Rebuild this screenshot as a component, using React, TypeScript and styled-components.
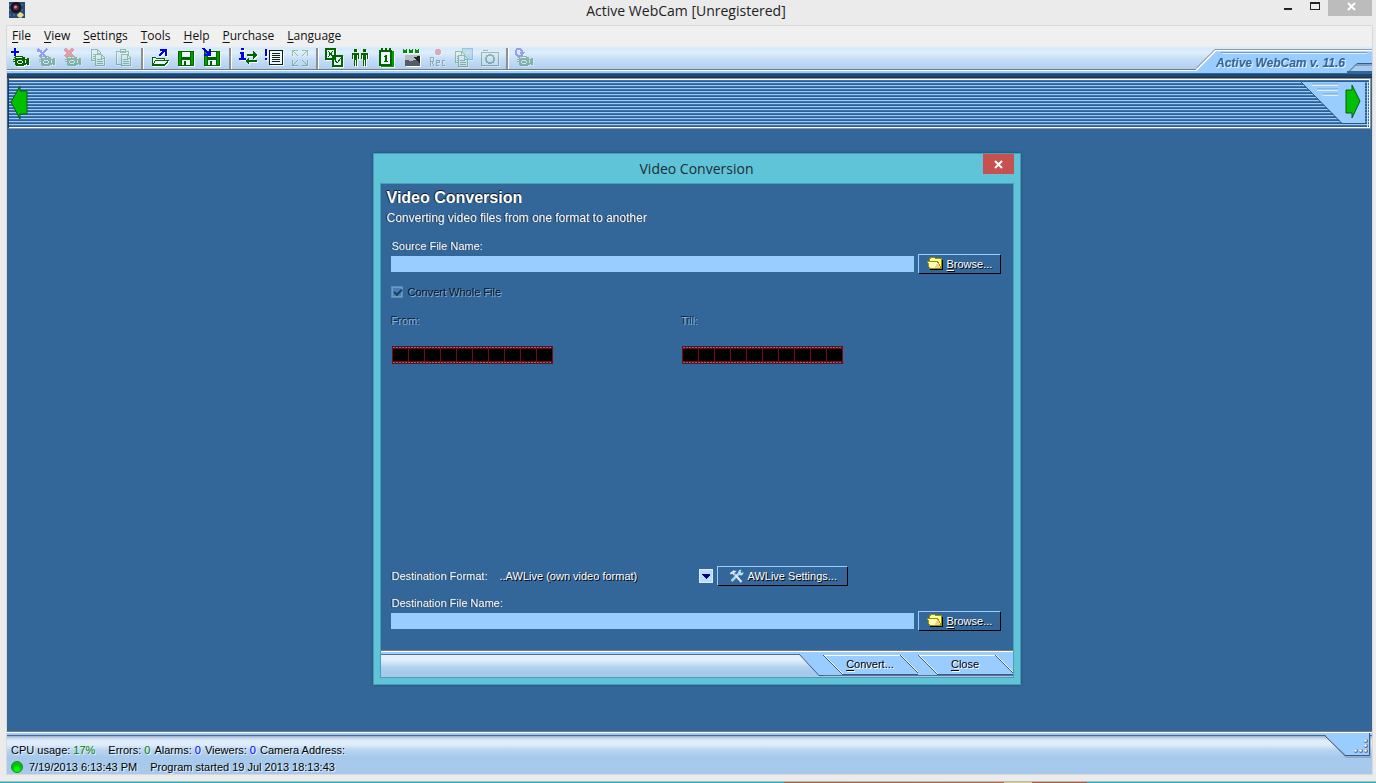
import React from "react";
import styled, { createGlobalStyle } from "styled-components";

const navy = "#336699";
const sky = "#99ccff";
const green = "#006400";
const blue = "#0000f0";
const glass =
  "linear-gradient(#b4cdea 0, #deedfb 3px, #e4f0fc 9px, #cfe3f6 13px, #b3d2f0 17px, #a6c9ec 22px)";

const Global = createGlobalStyle`
  * { box-sizing: border-box; }
  body { margin: 0; background: #ebebeb; }
  button, input, select { font: inherit; }
`;

const Shell = styled.div`
  min-height: 100vh;
  display: flex;
  flex-direction: column;
  font: 11px/16px "Liberation Sans", Arial, sans-serif;
  background: #ebebeb;
  color: #000;
`;

const TitleBar = styled.header`
  display: grid;
  grid-template-columns: 1fr auto 1fr;
  height: 25px;
  padding: 0 4px 0 0;
`;
const AppIcon = styled.svg`
  width: 16px;
  height: 16px;
  margin: 2px 0 0 9px;
`;
const WindowTitle = styled.h1`
  margin: 0;
  font: 14px/22px "Open Sans", "Noto Sans", sans-serif;
  color: #222;
`;
const WindowControls = styled.div`
  display: flex;
  justify-content: flex-end;
  align-items: flex-start;
`;
const WindowButton = styled.button<{ $close?: boolean }>`
  width: ${(p) => (p.$close ? 44 : 27)}px;
  height: 16px;
  padding: 0;
  border: 0;
  background: ${(p) => (p.$close ? "#bcbcbc" : "transparent")};
  svg { display: block; margin: 0 auto; }
`;

const Body = styled.div`
  flex: 1;
  display: flex;
  flex-direction: column;
  margin: 0 3px 0 6px;
  border: 1px solid #d9d9d9;
  background: ${navy};
`;

const MenuBar = styled.nav`
  display: flex;
  height: 20px;
  padding-left: 5px;
  gap: 13px;
  background: #f0f0f0;
`;
const MenuLink = styled.a`
  font: 12px/20px "Open Sans", "Noto Sans", sans-serif;
  color: #111;
  text-decoration: none;
`;
const Key = styled.span`
  text-decoration: underline;
  text-underline-offset: 2px;
`;

const ToolStrip = styled.div`
  display: flex;
  justify-content: space-between;
  height: 27px;
  background: linear-gradient(#f0f0f0 0, #d5e9fb 2px, #deedfb 7px, #c5def6 13px, #b0d0f0 23px, #77797c 23px, #77797c 24px, #fff 24px, #fff 25px, ${sky} 25px);
`;
const Tools = styled.div`
  display: flex;
  height: 24px;
  align-items: center;
`;
const ToolButton = styled.button`
  width: 26px;
  height: 22px;
  padding: 1px 3px;
  border: 0;
  background: none;
  &:disabled { opacity: 0.32; }
  svg { display: block; filter: drop-shadow(1px 1px 0 #fff); }
`;
const ToolGap = styled.span<{ $narrow?: boolean }>`
  display: flex;
  justify-content: center;
  width: ${(p) => (p.$narrow ? 8 : 10)}px;
  height: 21px;
  &::before {
    content: "";
    width: 2px;
    background: #8b9095;
    border-right: 1px solid #fff;
  }
`;
const Version = styled.div`
  display: grid;
  width: 176px;
  > * { grid-area: 1 / 1; }
`;
const VersionText = styled.strong`
  z-index: 1;
  padding: 8px 0 0 20px;
  font: italic bold 12px/18px "Liberation Sans", Arial, sans-serif;
  color: #2f6496;
  text-shadow: 1px 1px 0 #e8f4ff;
`;

const Strip = styled.section`
  display: flex;
  flex-direction: column;
  height: 56px;
  padding: 5px 1px 0;
  background: linear-gradient(${navy} 0, ${navy} 1px, #1d4770 1px, #1d4770 4px, #16324f 4px, #16324f 5px, ${navy} 5px);
`;
const StripFrame = styled.div`
  flex: 1;
  display: flex;
  justify-content: space-between;
  border: 1px solid #8d9299;
  border-left-color: #1d3b5b;
  box-shadow: inset 0 1px 0 #fff, inset -1px -1px 0 #fff;
  background: repeating-linear-gradient(${sky} 0, ${sky} 1px, #4076ac 1px, #4076ac 2px, #2f6093 2px, #2f6093 3px);
`;
const StripButton = styled.button`
  padding: 0;
  border: 0;
  background: none;
  svg { display: block; }
`;

const Workspace = styled.main`
  flex: 1;
  display: flex;
  justify-content: center;
  align-items: flex-start;
  padding: 24px 0 24px 14px;
`;

const Dialog = styled.section`
  width: 648px;
  border: 1px solid #459fb3;
  background: #60c4d8;
  box-shadow: 0 0 2px #1f466d;
  padding: 0 6px 6px;
`;
const DialogBar = styled.div`
  display: grid;
  grid-template-columns: 1fr auto 1fr;
  height: 29px;
`;
const DialogCaption = styled.h2`
  margin: 0;
  font: 14px/30px "Open Sans", "Noto Sans", sans-serif;
  color: #1d2c33;
`;
const DialogClose = styled.button`
  justify-self: end;
  width: 31px;
  height: 20px;
  padding: 0;
  border: 0;
  background: #c75050;
  svg { display: block; margin: 0 auto; }
`;
const DialogBody = styled.form`
  border: 1px solid #4a9fb4;
  background: ${navy};
  color: #fff;
`;
const Fields = styled.div`
  display: flex;
  flex-direction: column;
  height: 466px;
  padding: 4px 12px 0 10px;
`;
const Heading = styled.h3`
  margin: 0 0 0 -4px;
  font: bold 16px/20px "Liberation Sans", Arial, sans-serif;
  text-shadow: -1px 0 0 #0b1a28, 0 -1px 0 #0b1a28;
`;
const Lead = styled.p`
  margin: 2px 0 12px -4px;
  font-size: 12px;
  line-height: 16px;
  text-shadow: -1px 0 0 #0f2235;
`;
const Caption = styled.label<{ $dim?: boolean; $column?: boolean }>`
  ${(p) => (p.$column ? "width: 109px;" : "")}
  padding-left: 1px;
  color: ${(p) => (p.$dim ? "#86b2de" : "#fff")};
  text-shadow: ${(p) => (p.$dim ? "-1px -1px 0 #0b1a28" : "-1px 0 0 #14304b")};
`;
const Row = styled.div`
  display: flex;
  align-items: center;
`;
const PathInput = styled.input`
  flex: 1;
  min-width: 0;
  height: 16px;
  padding: 0 3px;
  border: 0;
  background: ${sky};
`;
const PushButton = styled.button<{ $wide?: boolean }>`
  display: flex;
  align-items: center;
  gap: 3px;
  width: ${(p) => (p.$wide ? 131 : 83)}px;
  height: 20px;
  margin-left: 4px;
  padding: 0 0 0 ${(p) => (p.$wide ? 10 : 8)}px;
  border: 1px solid;
  border-color: ${sky} #000 #000 ${sky};
  background: ${navy};
  color: #fff;
  white-space: nowrap;
  text-shadow: 1px 1px 0 #000;
`;
const CheckRow = styled.label`
  display: flex;
  align-items: center;
  gap: 5px;
  margin: 10px 0 13px;
  color: #0a1622;
  text-shadow: 1px 1px 0 #86b2de;
`;
const CheckBox = styled.input`
  appearance: none;
  width: 12px;
  height: 12px;
  margin: 0;
  border: 1px solid #5c89b8;
  background: #4a7db0;
  box-shadow: inset 0 0 0 1px #6d9ac8;
  &:checked::before {
    content: "";
    display: block;
    width: 6px;
    height: 3px;
    margin: 2px 0 0 2px;
    border: solid #14415c;
    border-width: 0 0 2px 2px;
    rotate: -45deg;
  }
`;
const Clips = styled.div`
  display: grid;
  grid-template-columns: 290px 1fr;
  row-gap: 17px;
  svg { display: block; margin-left: 1px; }
`;
const Destination = styled.div`
  margin-top: auto;
  padding-bottom: 19px;
`;
const FormatRow = styled(Row)`
  margin-bottom: 9px;
`;
const FormatBox = styled.div`
  display: grid;
  width: 213px;
  align-items: center;
  > * { grid-area: 1 / 1; }
  svg { justify-self: end; pointer-events: none; }
`;
const FormatSelect = styled.select`
  appearance: none;
  width: 100%;
  height: 18px;
  padding: 0;
  border: 0;
  background: ${navy};
  color: #fff;
  text-shadow: 1px 1px 0 #000;
`;
const Footer = styled.footer`
  display: flex;
  justify-content: flex-end;
  height: 27px;
  padding-top: 4px;
  background: linear-gradient(#77797c 0, #77797c 1px, #fff 1px, #fff 2px, ${sky} 2px, ${sky} 4px, #5a6f94 4px, #5a6f94 5px, transparent 5px), ${glass};
`;
const FooterTab = styled.div`
  display: flex;
  height: 22px;
`;
const FooterButtons = styled.div`
  display: flex;
  background: ${sky};
  height: 22px;
  border-bottom: 1px solid #5a6f94;
`;
const SlantButton = styled.button`
  display: grid;
  width: 95px;
  height: 21px;
  padding: 0;
  border: 0;
  background: none;
  color: #000;
  > * { grid-area: 1 / 1; }
`;
const SlantText = styled.span`
  line-height: 20px;
  text-shadow: 1px 1px 0 #fff;
`;

const StatusBar = styled.footer`
  display: flex;
  justify-content: space-between;
  height: 43px;
  background: linear-gradient(#77797c 0, #77797c 1px, #fff 1px, #fff 2px, ${sky} 2px, ${sky} 4px, #4f678d 4px, #4f678d 5px, #94abc5 5px, #c3d7ec 7px, #e1eefb 10px, #deecfa 14px, #b9d5f1 19px, #a6c9ec 26px);
`;
const StatusRows = styled.div`
  padding: 10px 0 0 4px;
`;
const StatusRow = styled.div`
  display: flex;
  align-items: center;
  height: 17px;
  white-space: pre;
  text-shadow: 1px 1px 0 #e8f2fc;
`;
const Value = styled.span<{ $tone?: "ok" | "info" }>`
  margin: 0 4px 0 3px;
  color: ${(p) => (p.$tone === "info" ? "#0000ff" : "#008000")};
`;
const Item = styled.span<{ $gap?: number }>`
  margin-right: ${(p) => p.$gap ?? 0}px;
`;
const Lamp = styled.span`
  width: 12px;
  height: 12px;
  margin: 0 6px 0 0;
  border: 1px solid #2c7a34;
  border-radius: 6px;
  background: radial-gradient(circle at 5px 8px, #00ff00 2px, #00c400 5px);
`;
const Desktop = styled.div`
  height: 8px;
  background: linear-gradient(#ebebeb 6px, #b8b8b8 6px, #b8b8b8 7px, transparent 7px),
    linear-gradient(90deg, #17b4cc 0, #17b4cc 57%, #a75b3e 57%, #b4694a 73%, #d9cf8c 73%, #d9cf8c 75%, #a75b3e 75%, #a75b3e 79%, #17b4cc 79%);
`;

const Glyph = ({ children }: { children: React.ReactNode }) => (
  <svg width="20" height="20" viewBox="0 0 20 20" shapeRendering="crispEdges" aria-hidden="true">
    {children}
  </svg>
);
const Camera = () => (
  <g>
    <path fill={green} d="M5 8h8v1h2v2h2v-1h2v7h-2v-1h-1v1h-2v1H6v-1H5v-3H3v-1h2v-1H3v-1h2v-1H4V9h1z" />
    <path fill="#eef6fd" d="M6 9h6v1H6zM8 12h4v1H8zM7 13h1v2H7zM12 13h1v2h-1zM8 15h4v1H8zM15 12h1v3h-1z" />
  </g>
);
const Page = ({ x, y }: { x: number; y: number }) => (
  <g>
    <path fill="#e8f4ea" stroke={green} d={`M${x + 0.5} ${y + 0.5}h6l3 3v8h-9z`} />
    <path stroke={green} d={`M${x + 6.5} ${y + 1}v3h3M${x + 2} ${y + 5.5}h5M${x + 2} ${y + 7.5}h6M${x + 2} ${y + 9.5}h6`} fill="none" />
  </g>
);
const Floppy = () => (
  <g>
    <path fill={green} d="M2 3h15l1 1v14H2z" />
    <path fill="#00a000" d="M3 4h2v13H3zM15 4h2v13h-2z" />
    <path fill="#eef6fd" d="M6 4h8v5H6zM6 12h8v5H6z" />
    <path fill={green} d="M8 13h2v4H8z" />
  </g>
);

const tools: Record<string, React.ReactNode> = {
  "Add camera": <><Camera /><path fill={blue} d="M4 0h2v3h3v2H6v3H4V5H1V3h3z" /></>,
  "Camera settings": <><Camera /><path stroke={blue} strokeWidth="2" fill="none" d="M2 1l9 9M11 1L3 9M1 3h5" /></>,
  "Remove camera": <><Camera /><path stroke="#f00000" strokeWidth="3" fill="none" d="M3 1l8 8M11 1L3 9" /></>,
  Copy: <><Page x={3} y={1} /><Page x={7} y={6} /></>,
  Paste: <><path fill="none" stroke={green} d="M2.5 3.5h12v13h-12zM6 1.5h5v3H6z" /><Page x={7} y={6} /></>,
  Open: <><path fill="#eef6fd" stroke={green} d="M2.5 16.5v-7h3l1 1h8v2M2.5 17.5l3-5h13l-4 5z" /><path fill={green} d="M2 16h13v2H2z" /><path fill="none" stroke={blue} strokeWidth="2" d="M9 8l6-6M10 2h6v6" /></>,
  Save: <Floppy />,
  "Save as": <><Floppy /><path fill="none" stroke={blue} strokeWidth="2" d="M1 0l7 7M2 7h6V1" /></>,
  Connections: <><path fill={blue} d="M3 0h3v2H3zM2 4h4v6h2v2H1v-2h2V6H2z" /><path fill={green} d="M9 6h6V3l4 4-4 4V8H9zM19 14h-8v3l-4-4 4-4v3h8z" /></>,
  Events: <><path fill={blue} d="M1 1h2v7H1zM1 10h2v2H1z" /><path fill="#eef6fd" stroke="#102010" d="M5.5 2.5h13v14h-13z" /><path stroke="#102010" d="M8 5.5h8M8 7.5h8M8 9.5h8M8 11.5h8M8 13.5h8" /></>,
  "Full screen": <path fill="none" stroke={green} strokeWidth="1" d="M2.5 8V2.5H8M3 3l5 5M12 2.5h5.500V8M17 3l-5 5M2.500 12v5.500H8M3 17l5-5M17.500 12v5.500H12M17 17l-5-5" />,
  Schedule: <><path fill="#eef6fd" stroke={green} strokeWidth="2" d="M2 1h9v10H2zM9 8h9v10H9z" /><path stroke={green} d="M4 3l5 6M9 3l-5 6M11 12l2 3 4-5" fill="none" /></>,
  Users: <g fill={green}><path d="M4 1h3v3H4zM2 5h7v6H8V7H7v11H6v-6H5v6H4V7H3v4H2zM13 1h3v3h-3zM11 5h7v6h-1V7h-1v11h-1v-6h-1v6h-1V7h-1v4h-1z" /></g>,
  Calendar: <><path fill="#00a000" d="M5 3h13v16H5z" /><path fill="#eef6fd" stroke={green} strokeWidth="2" d="M4 3h11v14H4z" /><path fill={green} d="M5 0h2v4H5zM9 0h2v4H9zM13 0h2v4h-2zM9 7h2v6h1v1H8v-1h1V9H8V8h1z" /></>,
  "Web page": <><path fill="#555b62" d="M3 7h15v11H3z" /><path fill="#b5bcc4" d="M3 7h15v3l-8 3-7-1z" /><path fill="#222" d="M11 9l7-1v7z" /><path fill="none" stroke="#009000" d="M1 1l1 4 1-3 1 3 1-4M7 1l1 4 1-3 1 3 1-4M13 1l1 4 1-3 1 3 1-4" /></>,
  Record: <><circle cx="10" cy="4" r="3" fill="#e02020" /><path fill="none" stroke="#174c2c" d="M2.500 18V9.500h3v4h-3M4 14l2 4M8 14.500h3v-2H8.500v5H11M17 12.500h-3v5h3" /></>,
  Snapshots: <><path fill="#70c0f0" stroke="#2070b0" d="M8.500 .5h10v11h-10z" /><path fill="#e0d030" d="M12 3h3v3h-3z" /><Page x={1} y={3} /><Page x={4} y={7} /></>,
  Snapshot: <><path fill="#dcebe6" stroke="#174c2c" d="M1.500 4.500h17v13h-17zM3 2.500h5" /><circle cx="10" cy="11" r="4" fill="none" stroke="#174c2c" strokeWidth="2" /></>,
  "Motion camera": <><Camera /><path fill="none" stroke={blue} strokeWidth="2" d="M9 3H8L6 1H3L2 3v3l2 2h3l2-3H6" /></>,
};

const Tool = ({ name, disabled }: { name: string; disabled?: boolean }) => (
  <ToolButton type="button" aria-label={name} title={name} disabled={disabled}>
    <Glyph>{tools[name]}</Glyph>
  </ToolButton>
);

const Folder = () => (
  <svg width="17" height="14" viewBox="0 0 17 14" shapeRendering="crispEdges" aria-hidden="true">
    <path fill="#000" d="M3 3h13v10H3z" />
    <path fill="#ffff99" stroke="#9a9000" d="M2.500 10.500v-8l1-2h4l1 1h6v10z" />
    <path fill="#ffffb4" d="M0 4h11l3 7H2z" />
    <path fill="none" stroke="#9a9000" d="M0 4.500h10.500l4 7H2.500l-2-7" />
    <path fill="#f0cf98" d="M9 7h2l1 1v1l1 2H8V9h1z" />
  </svg>
);
const Wrench = () => (
  <svg width="17" height="14" viewBox="0 0 16 14" aria-hidden="true">
    <path d="M3 12L11 4" stroke="#9fd4f4" strokeWidth="2.500" />
    <path d="M10 5c-1-3 1-5 3-4l-1 2 1 1 2-1c0 3-2 4-4 3z" fill="#b9e2fa" />
    <path d="M6 5l7 8" stroke="#dcebf5" strokeWidth="2" />
    <path d="M1 4l4-3 4 1-3 2 1 1-2 2-1-2-2 1z" fill="#d6e9f8" stroke="#22466b" strokeWidth=".5" />
  </svg>
);
const Film = () => {
  const cells = Array.from({ length: 10 }, (_, i) => i);
  const holes = Array.from({ length: 53 }, (_, i) => i);
  return (
    <svg width="162" height="18" viewBox="0 0 162 18" shapeRendering="crispEdges" aria-hidden="true">
      <path fill="#7a0810" d="M0 0h161v18H0z" />
      {cells.map((i) => (
        <path key={i} d={`M${i * 16 + 1} 3h15v12h-15z`} />
      ))}
      {holes.map((i) => (
        <path key={i} fill="#4a78a8" d={`M${i * 3 + 1} 1h2v1h-2zM${i * 3 + 1} 16h2v1h-2z`} />
      ))}
    </svg>
  );
};
const Slant = () => (
  <svg width="95" height="21" viewBox="0 0 95 21" aria-hidden="true">
    <path d="M1 1.500h77" stroke="#fff" />
    <path d="M1 1l19 19M78 1l19 19" stroke="#fff" />
    <path d="M0 1l19 19M77 1l19 19" stroke="#44597f" />
    <path d="M19 20.500h76" stroke="#44597f" />
  </svg>
);

const menus = ["File", "View", "Settings", "Tools", "Help", "Purchase", "Language"];

const BrowseButton = () => (
  <PushButton type="button">
    <Folder />
    <span><Key>B</Key>rowse...</span>
  </PushButton>
);

export default function App() {
  return (
    <Shell>
      <Global />
      <TitleBar>
        <AppIcon viewBox="0 0 16 16" aria-hidden="true">
          <path fill="#284a70" d="M0 0h16v16H0z" />
          <path stroke="#5684ae" strokeDasharray="2 2" d="M0 3h16M0 8h16M0 13h16" />
          <circle cx="7" cy="5.500" r="5.500" fill="#15151f" />
          <circle cx="7" cy="5.500" r="3" fill="#5c2745" />
          <circle cx="6.500" cy="5" r="1.500" fill="#e879ae" />
          <path fill="#e8dc8c" d="M11 10l2 1 2 2-3 3-3-1-1-2z" />
        </AppIcon>
        <WindowTitle>Active WebCam [Unregistered]</WindowTitle>
        <WindowControls>
          <WindowButton type="button" aria-label="Minimize">
            <svg width="27" height="16"><path fill="#222" d="M10 8h8v2h-8z" /></svg>
          </WindowButton>
          <WindowButton type="button" aria-label="Maximize">
            <svg width="27" height="16" shapeRendering="crispEdges"><path fill="#222" fillRule="evenodd" d="M9 2h10v8H9zm1 2v5h8V4z" /></svg>
          </WindowButton>
          <WindowButton $close type="button" aria-label="Close">
            <svg width="44" height="16"><path d="M20 3l7 7M27 3l-7 7" stroke="#fff" strokeWidth="2" /></svg>
          </WindowButton>
        </WindowControls>
      </TitleBar>
      <Body>
        <MenuBar>
          {menus.map((m) => (
            <MenuLink key={m} href="#"><Key>{m[0]}</Key>{m.slice(1)}</MenuLink>
          ))}
        </MenuBar>
        <ToolStrip>
          <Tools role="toolbar">
            <Tool name="Add camera" />
            <Tool name="Camera settings" disabled />
            <Tool name="Remove camera" disabled />
            <Tool name="Copy" disabled />
            <Tool name="Paste" disabled />
            <ToolGap />
            <Tool name="Open" />
            <Tool name="Save" />
            <Tool name="Save as" />
            <ToolGap />
            <Tool name="Connections" />
            <Tool name="Events" />
            <Tool name="Full screen" disabled />
            <ToolGap $narrow />
            <Tool name="Schedule" />
            <Tool name="Users" />
            <Tool name="Calendar" />
            <Tool name="Web page" />
            <Tool name="Record" disabled />
            <Tool name="Snapshots" disabled />
            <Tool name="Snapshot" disabled />
            <ToolGap $narrow />
            <Tool name="Motion camera" disabled />
          </Tools>
          <Version>
            <VersionText>Active WebCam v. 11.6</VersionText>
            <svg width="176" height="27" viewBox="0 0 176 27" aria-hidden="true">
              <path fill={sky} d="M0 26V24L20 4h156v21H0z" />
              <path fill="#a9cbee" d="M154 25l8-7h14v7z" />
              <path fill="#7f9fc4" d="M161 18h15v2h-17z" />
              <path fill={navy} d="M151 25h25v2h-25z" />
              <path fill="none" stroke="#77797c" d="M0 22.500L19 3.500h157" />
              <path fill="none" stroke="#fff" strokeWidth="1.500" d="M0 24.500L20 4.500h156" />
              <path stroke="#dceeff" d="M26 7.500h145" />
              <path stroke="#6f9fd0" d="M25 6.500h146" />
              <path fill="none" stroke="#44597f" d="M152 26.500l9-9h15" />
            </svg>
          </Version>
        </ToolStrip>
        <Strip>
          <StripFrame>
            <StripButton type="button" aria-label="Previous cameras">
              <svg width="22" height="48" viewBox="0 0 22 48" aria-hidden="true">
                <path fill="#00c000" stroke="#0a5a20" d="M2 22L11 6v5h7v23h-7v5z" />
              </svg>
            </StripButton>
            <StripButton type="button" aria-label="Next cameras">
              <svg width="70" height="48" viewBox="0 0 70 48" aria-hidden="true">
                <path fill={sky} d="M1 2h64v41H42z" />
                <path fill="none" stroke="#31527a" d="M1 2l41 41.500h24V2" />
                <path stroke="#dceeff" strokeWidth="2" d="M12 5h26M17 10h21M23 15h15" />
                <path stroke="#6f9fd0" d="M12 4h26M17 9h21M23 14h15" />
                <path stroke="#c4e1ff" d="M67.500 2v45" />
                <path fill="#00c000" stroke="#0a5a20" d="M60 21L52 5v5h-6v23h6v5z" />
              </svg>
            </StripButton>
          </StripFrame>
        </Strip>
        <Workspace>
          <Dialog role="dialog" aria-labelledby="dialog-caption">
            <DialogBar>
              <span />
              <DialogCaption id="dialog-caption">Video Conversion</DialogCaption>
              <DialogClose type="button" aria-label="Close dialog">
                <svg width="31" height="20" viewBox="0 0 31 20" aria-hidden="true">
                  <path d="M12 7l7 7M19 7l-7 7" stroke="#fff" strokeWidth="2" />
                </svg>
              </DialogClose>
            </DialogBar>
            <DialogBody onSubmit={(e) => e.preventDefault()}>
              <Fields>
                <Heading>Video Conversion</Heading>
                <Lead>Converting video files from one format to another</Lead>
                <Caption htmlFor="source">Source File Name:</Caption>
                <Row>
                  <PathInput id="source" type="text" />
                  <BrowseButton />
                </Row>
                <CheckRow>
                  <CheckBox type="checkbox" defaultChecked disabled />
                  Convert Whole File
                </CheckRow>
                <Clips>
                  <Caption as="span" $dim>From:</Caption>
                  <Caption as="span" $dim>Till:</Caption>
                  <Film />
                  <Film />
                </Clips>
                <Destination>
                  <FormatRow>
                    <Caption htmlFor="format" $column>Destination Format:</Caption>
                    <FormatBox>
                      <FormatSelect id="format">
                        <option>..AWLive (own video format)</option>
                      </FormatSelect>
                      <svg width="14" height="14" viewBox="0 0 14 14" shapeRendering="crispEdges" aria-hidden="true">
                        <path fill="#b8dbff" stroke="#deeeff" d="M.5 .5h13v13H.5z" />
                        <path fill="#000080" d="M3 5h8v1l-4 4-4-4z" />
                      </svg>
                    </FormatBox>
                    <PushButton $wide type="button"><Wrench /><span>AWLive Settings...</span></PushButton>
                  </FormatRow>
                  <Caption htmlFor="target">Destination File Name:</Caption>
                  <Row>
                    <PathInput id="target" type="text" />
                    <BrowseButton />
                  </Row>
                </Destination>
              </Fields>
              <Footer>
                <FooterTab>
                  <svg width="24" height="22" viewBox="0 0 24 22" aria-hidden="true">
                    <path fill={sky} d="M0 0h24v21h-4z" />
                    <path fill="none" stroke="#44597f" d="M0 0l20 21.500h4" />
                  </svg>
                  <FooterButtons>
                    <SlantButton type="submit"><Slant /><SlantText><Key>C</Key>onvert...</SlantText></SlantButton>
                    <SlantButton type="button"><Slant /><SlantText><Key>C</Key>lose</SlantText></SlantButton>
                  </FooterButtons>
                </FooterTab>
              </Footer>
            </DialogBody>
          </Dialog>
        </Workspace>
        <StatusBar>
          <StatusRows>
            <StatusRow>
              <Item>CPU usage:</Item><Value>17%</Value>
              <Item $gap={9} />
              <Item>Errors:</Item><Value>0</Value>
              <Item>Alarms:</Item><Value $tone="info">0</Value>
              <Item>Viewers:</Item><Value $tone="info">0</Value>
              <Item>Camera Address:</Item>
            </StatusRow>
            <StatusRow>
              <Lamp />
              <Item $gap={13}>7/19/2013 6:13:43 PM</Item>
              <Item $gap={3}>Program started</Item>
              <Item>19 Jul 2013 18:13:43</Item>
            </StatusRow>
          </StatusRows>
          <svg width="48" height="28" viewBox="0 0 48 28" aria-hidden="true">
            <path fill="#7d97b8" d="M2 6l20 21h25V5z" opacity=".6" />
            <path fill={sky} d="M0 3h45v21H22z" />
            <path fill="none" stroke="#44597f" d="M0 4l21 20.500h24.500V2" />
            <g fill="#5b708c"><circle cx="42" cy="10" r="2" /><circle cx="42" cy="15" r="2" /><circle cx="42" cy="20" r="2" /><circle cx="37" cy="20" r="2" /><circle cx="32" cy="20" r="2" /></g>
            <g fill="#fff"><circle cx="41.500" cy="9.500" r="1.300" /><circle cx="41.500" cy="14.500" r="1.300" /><circle cx="41.500" cy="19.500" r="1.300" /><circle cx="36.500" cy="19.500" r="1.300" /><circle cx="31.500" cy="19.500" r="1.300" /></g>
          </svg>
        </StatusBar>
      </Body>
      <Desktop />
    </Shell>
  );
}
